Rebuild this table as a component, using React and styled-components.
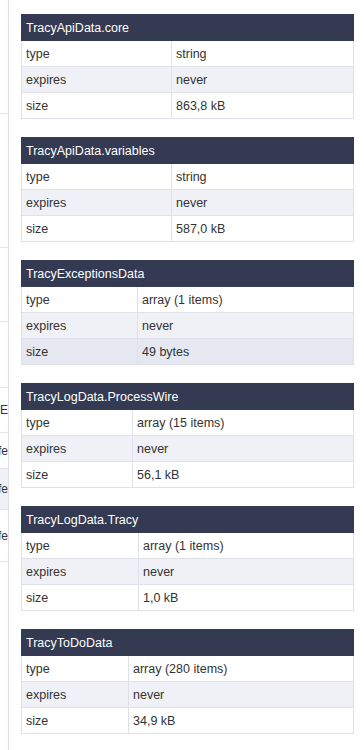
import React from 'react';
import styled, { createGlobalStyle } from 'styled-components';

const GlobalStyle = createGlobalStyle`
  html, body {
    margin: 0;
    padding: 0;
    background: #fff;
  }
  body {
    font-family: 'Liberation Sans', Arial, sans-serif;
    font-size: 12px;
    color: #333;
  }
`;

const Page = styled.div`
  display: flex;
  width: 364px;
  height: 750px;
  overflow: hidden;
  background: #fff;
`;

const Sidebar = styled.div`
  display: flex;
  flex-direction: column;
  width: 8px;
  flex-shrink: 0;
  border-right: 1px solid #dcdfe9;
  overflow: hidden;
`;

const SideRow = styled.div`
  display: flex;
  justify-content: flex-end;
  align-items: center;
  height: ${(p) => p.h}px;
  border-bottom: 1px solid #e3e5ee;
  background: ${(p) => (p.active ? '#f0f1f6' : '#fff')};
  color: #333;
  font-size: 12px;
  white-space: nowrap;
  box-sizing: border-box;
`;

const Main = styled.div`
  flex: 1;
  padding: 14px 10px 0 12px;
`;

const Table = styled.table`
  width: 333px;
  border-collapse: collapse;
  table-layout: fixed;
  margin-bottom: 18px;
  border: 1px solid #dfe1ea;
`;

const HeadCell = styled.th`
  height: 25px;
  padding: 0 4px;
  background: #333a52;
  color: #fff;
  font-weight: normal;
  font-size: 12.5px;
  text-align: left;
  border: 1px solid #333a52;
`;

const Row = styled.tr`
  background: ${(p) => (p.hover ? '#e5e8f0' : p.odd ? '#f0f1f6' : '#fff')};
`;

const Cell = styled.td`
  height: 25px;
  padding: 0 4px;
  border: 1px solid #dfe1ea;
  font-size: 12.5px;
  color: #333;
  white-space: nowrap;
`;

const sideRows = [
  { h: 114 },
  { h: 134 },
  { h: 74 },
  { h: 66 },
  { h: 45, text: 'SECURE' },
  { h: 36, text: 'safe' },
  { h: 41, text: 'safe', active: true },
  { h: 52, text: 'safe' },
];

const tables = [
  { name: 'TracyApiData.core', split: 150, type: 'string', size: '863,8 kB' },
  { name: 'TracyApiData.variables', split: 150, type: 'string', size: '587,0 kB' },
  { name: 'TracyExceptionsData', split: 116, type: 'array (1 items)', size: '49 bytes', hover: true },
  { name: 'TracyLogData.ProcessWire', split: 111, type: 'array (15 items)', size: '56,1 kB' },
  { name: 'TracyLogData.Tracy', split: 117, type: 'array (1 items)', size: '1,0 kB' },
  { name: 'TracyToDoData', split: 107, type: 'array (280 items)', size: '34,9 kB' },
];

const CacheTable = ({ name, split, type, size, hover }) => (
  <Table>
    <colgroup>
      <col style={{ width: split }} />
      <col />
    </colgroup>
    <thead>
      <tr>
        <HeadCell colSpan={2}>{name}</HeadCell>
      </tr>
    </thead>
    <tbody>
      <Row>
        <Cell>type</Cell>
        <Cell>{type}</Cell>
      </Row>
      <Row odd>
        <Cell>expires</Cell>
        <Cell>never</Cell>
      </Row>
      <Row hover={hover}>
        <Cell>size</Cell>
        <Cell>{size}</Cell>
      </Row>
    </tbody>
  </Table>
);

const App = () => (
  <Page>
    <GlobalStyle />
    <Sidebar>
      {sideRows.map((r, i) => (
        <SideRow key={i} h={r.h} active={r.active}>
          {r.text}
        </SideRow>
      ))}
    </Sidebar>
    <Main>
      {tables.map((t) => (
        <CacheTable key={t.name} {...t} />
      ))}
    </Main>
  </Page>
);

export default App;
